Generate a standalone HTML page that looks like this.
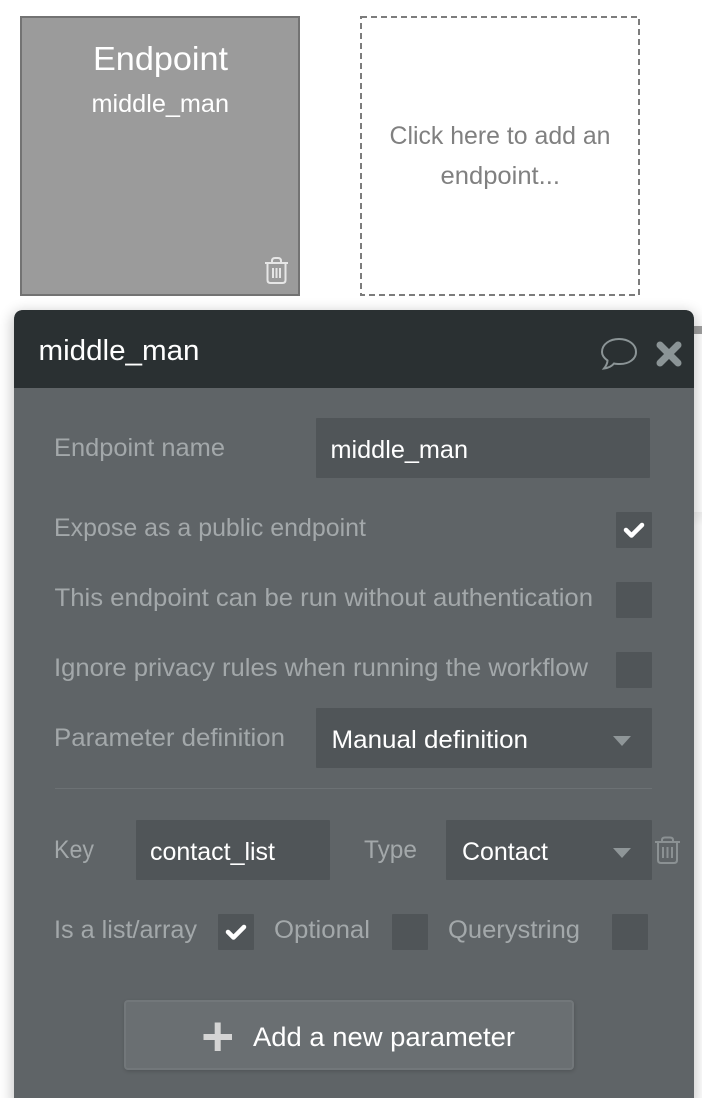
<!DOCTYPE html>
<html><head><meta charset="utf-8">
<style>
html,body{margin:0;padding:0;background:#fff;width:702px;height:1098px;overflow:hidden}
svg{display:block}
text{font-family:"Liberation Sans",Arial,sans-serif;font-size:25px;fill:#a3a8aa}
.w{fill:#fff}
.l{fill:#a3a8aa}
</style></head><body>
<svg width="702" height="1098" viewBox="0 0 702 1098" xmlns="http://www.w3.org/2000/svg">
<defs>
<filter id="sh" x="-5%" y="-5%" width="110%" height="110%"><feGaussianBlur stdDeviation="7"/></filter>
<filter id="sb" x="-5%" y="-20%" width="110%" height="140%"><feGaussianBlur stdDeviation="2"/></filter>
<linearGradient id="bg" x1="0" y1="0" x2="0" y2="1"><stop offset="0" stop-color="#f2f2f2"/><stop offset="1" stop-color="#fff"/></linearGradient>
</defs>
<rect x="694" y="326" width="8" height="8" fill="#a0a0a0"/>
<rect x="694" y="512" width="8" height="14" fill="url(#bg)"/>

<!-- cards -->
<rect x="21" y="17" width="278" height="278" fill="#9b9b9b" stroke="#737373" stroke-width="2"/>
<text x="93" y="70" class="w" style="font-size:33px" textLength="135" lengthAdjust="spacingAndGlyphs">Endpoint</text>
<text x="91.500" y="112" class="w" textLength="137.500" lengthAdjust="spacingAndGlyphs">middle_man</text>
<g fill="none" stroke="#e6e6e6" stroke-width="2">
<path d="M265 263H288M272 263V261Q272 258 275 258H278Q281 258 281 261V263M267.500 263.500V280Q267.500 283 270.500 283H282.500Q285.500 283 285.500 280V263.500"/>
<path d="M273 268V278M276.500 268V278M280 268V278"/>
</g>
<rect x="361" y="17" width="278" height="278" fill="#fff" stroke="#7c7c7c" stroke-width="2" stroke-dasharray="6 4"/>
<text x="389.500" y="144" style="fill:#808080" textLength="221" lengthAdjust="spacingAndGlyphs">Click here to add an</text>
<text x="440.500" y="184" style="fill:#808080" textLength="119.500" lengthAdjust="spacingAndGlyphs">endpoint...</text>

<!-- panel -->
<rect x="12" y="312" width="684" height="800" rx="10" fill="#000" opacity=".22" filter="url(#sh)"/>
<path d="M14 1098V320Q14 310 24 310H684Q694 310 694 320V1098Z" fill="#5f6467"/>
<path d="M14 388V320Q14 310 24 310H684Q694 310 694 320V388Z" fill="#2a3032"/>
<text x="38.500" y="360" class="w" style="font-size:29px" textLength="161" lengthAdjust="spacingAndGlyphs">middle_man</text>
<path d="M619 339C628 339 636 344 636 352C636 359 629 364 620 364C618 364 616 364 614 363.500C612 366 608 368 604 368.500C606 366 607.500 363 607.500 360.500C604 358 602 355 602 352C602 344 610 339 619 339Z" fill="none" stroke="#8b9496" stroke-width="2"/>
<path d="M660 345L678 363M678 345L660 363" stroke="#8b9496" stroke-width="7" stroke-linecap="round" fill="none"/>

<text x="54" y="456" class="l" textLength="171" lengthAdjust="spacingAndGlyphs">Endpoint name</text>
<rect x="316" y="418" width="334" height="60" rx="1" fill="#505558"/>
<text x="330.500" y="458" class="w" textLength="137.500" lengthAdjust="spacingAndGlyphs">middle_man</text>

<text x="54" y="536" class="l" textLength="312" lengthAdjust="spacingAndGlyphs">Expose as a public endpoint</text>
<rect x="616" y="512" width="36" height="36" rx="1" fill="#505558"/>
<path d="M626 530L631.500 535.500L642 525" fill="none" stroke="#fff" stroke-width="4.500" stroke-linecap="round" stroke-linejoin="round"/>

<text x="54.500" y="606" class="l" textLength="538.500" lengthAdjust="spacingAndGlyphs">This endpoint can be run without authentication</text>
<rect x="616" y="582" width="36" height="36" rx="1" fill="#505558"/>

<text x="54" y="676" class="l" textLength="534" lengthAdjust="spacingAndGlyphs">Ignore privacy rules when running the workflow</text>
<rect x="616" y="652" width="36" height="36" rx="1" fill="#505558"/>

<text x="54" y="746" class="l" textLength="231" lengthAdjust="spacingAndGlyphs">Parameter definition</text>
<rect x="316" y="708" width="336" height="60" rx="1" fill="#505558"/>
<text x="331.500" y="748" class="w" textLength="196.500" lengthAdjust="spacingAndGlyphs">Manual definition</text>
<path d="M613 736H631L622 746Z" fill="#8f9698"/>

<rect x="55" y="788" width="597" height="1" fill="#6c7174"/>

<text x="54" y="858" class="l" textLength="40" lengthAdjust="spacingAndGlyphs">Key</text>
<rect x="136" y="820" width="194" height="60" rx="1" fill="#505558"/>
<text x="150" y="860" class="w" textLength="125" lengthAdjust="spacingAndGlyphs">contact_list</text>
<text x="364" y="858" class="l" textLength="53" lengthAdjust="spacingAndGlyphs">Type</text>
<rect x="446" y="820" width="206" height="60" rx="1" fill="#505558"/>
<text x="462" y="860" class="w" textLength="86" lengthAdjust="spacingAndGlyphs">Contact</text>
<path d="M613 848H631L622 858Z" fill="#8f9698"/>
<g fill="none" stroke="#8b9193" stroke-width="2">
<path d="M655 842H680M662 842V840Q662 837.500 665 837.500H670Q673 837.500 673 840V842M658 842V860Q658 863 661 863H674Q677 863 677 860V842"/>
<path d="M663 847V858M667.500 847V858M672 847V858"/>
</g>

<text x="54" y="938" class="l" textLength="143" lengthAdjust="spacingAndGlyphs">Is a list/array</text>
<rect x="218" y="914" width="36" height="36" rx="1" fill="#505558"/>
<path d="M228 932L233.500 937.500L244 927" fill="none" stroke="#fff" stroke-width="4.500" stroke-linecap="round" stroke-linejoin="round"/>
<text x="274" y="938" class="l" textLength="96" lengthAdjust="spacingAndGlyphs">Optional</text>
<rect x="392" y="914" width="36" height="36" rx="1" fill="#505558"/>
<text x="448" y="938" class="l" textLength="132" lengthAdjust="spacingAndGlyphs">Querystring</text>
<rect x="612" y="914" width="36" height="36" rx="1" fill="#505558"/>

<rect x="125" y="1002" width="449" height="69" rx="3" fill="#000" opacity=".18" filter="url(#sb)"/>
<rect x="125" y="1001" width="448" height="68" rx="3" fill="#6a6f72" stroke="#72777a" stroke-width="2"/>
<path d="M203.500 1037H232M217.700 1022.500V1051" stroke="#d4d4d4" stroke-width="6" fill="none"/>
<text x="253" y="1046" class="w" style="font-size:27px" textLength="262" lengthAdjust="spacingAndGlyphs">Add a new parameter</text>
</svg>
</body></html>
